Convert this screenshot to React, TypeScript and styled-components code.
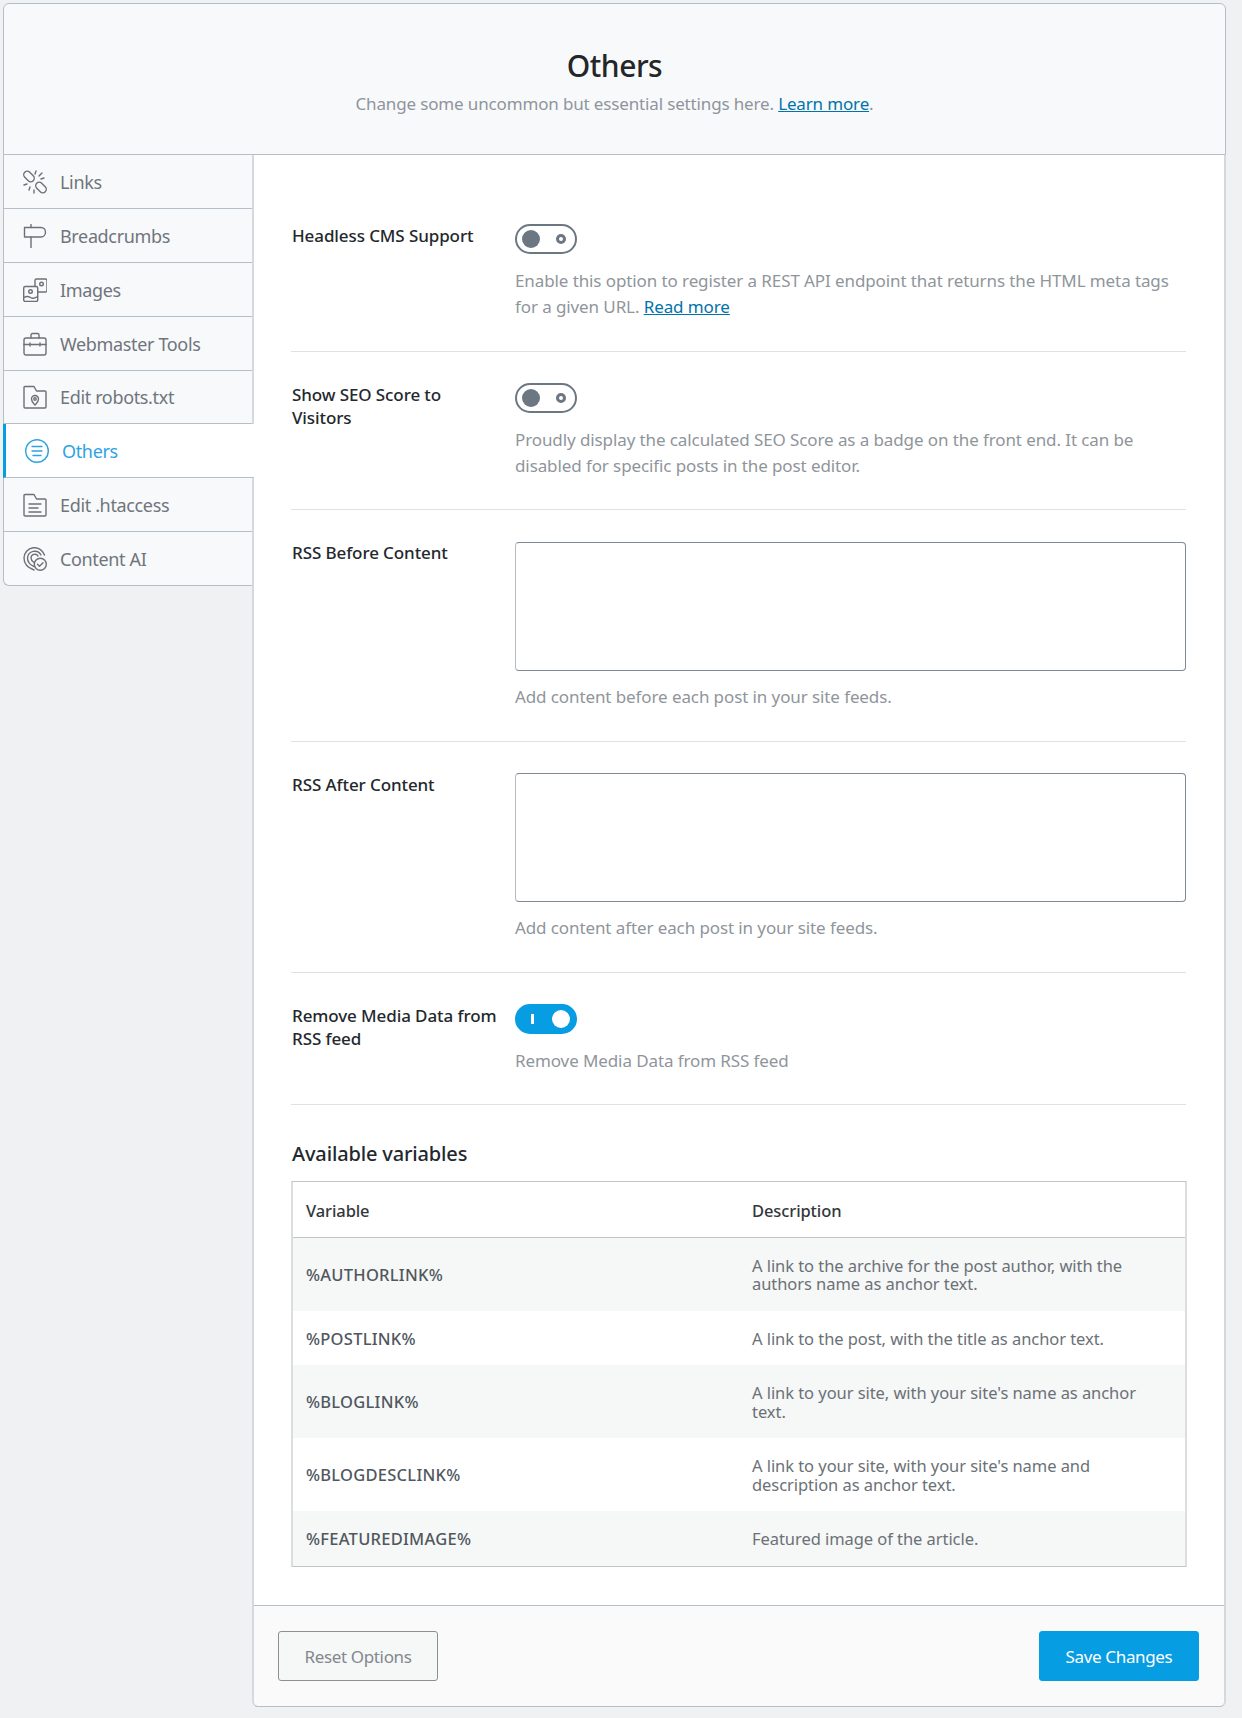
import * as React from 'react';
import styled, { createGlobalStyle } from 'styled-components';

const GlobalStyle = createGlobalStyle`
    html, body { margin: 0; padding: 0; background: #f0f1f3; }
    body {
        font-family: "Noto Sans", "Open Sans", "Liberation Sans", sans-serif;
        font-size: 16px;
        letter-spacing: -0.1px;
        color: #23282d;
    }
    * { box-sizing: border-box; }
`;

const Page = styled.div`
    width: 1242px;
    height: 1718px;
    padding: 3px 16px 12px 3px;
`;

const Header = styled.header`
    height: 152px;
    padding-top: 42px;
    text-align: center;
    background: #f8f9fb;
    border: 1px solid #b5bfc9;
    border-radius: 6px 6px 0 0;
`;

const Title = styled.h1`
    margin: 0;
    font-size: 30px;
    line-height: 40px;
    font-weight: 500;
    letter-spacing: -0.5px;
    color: #242628;
`;

const Subtitle = styled.p`
    margin: 5px 0 0;
    line-height: 26px;
    font-size: 17px;
    letter-spacing: -0.15px;
    color: #8f959b;
`;

const TextLink = styled.a`
    color: #0073aa;
    text-decoration: underline;
`;

const Body = styled.div`
    display: flex;
    align-items: flex-start;
`;

const Sidebar = styled.nav`
    width: 249px;
    flex: none;
    position: relative;
    z-index: 1;
    background: #f8f9fb;
    border-left: 1px solid #b5bfc9;
    border-bottom: 1px solid #b5bfc9;
    border-radius: 0 0 0 6px;
`;

const Tab = styled.div<{ $active?: boolean }>`
    display: flex;
    align-items: center;
    height: 53.88px;
    gap: 13px;
    padding: 1px 0 0 19px;
    margin-left: ${({ $active }) => ($active ? '-1px' : '0')};
    margin-right: ${({ $active }) => ($active ? '-2px' : '0')};
    font-size: 18px;
    letter-spacing: -0.35px;
    background: ${({ $active }) => ($active ? '#fff' : 'transparent')};
    color: ${({ $active }) => ($active ? '#2ea3e3' : '#6f757b')};
    border-left: ${({ $active }) => ($active ? '3px solid #069de3' : '0')};
    border-bottom: 1px solid #b5bfc9;

    &:last-child {
        border-bottom: 0;
        height: 52.88px;
    }
`;

const Main = styled.main`
    flex: 1;
    min-width: 0;
    background: #fff;
    border-left: 2px solid #d5d9de;
    border-right: 2px solid #d5d9de;
    border-bottom: 1px solid #b5bfc9;
    border-radius: 0 0 6px 6px;
`;

const Content = styled.div`
    padding: 38px 38px 38px 37px;
`;

const Row = styled.section<{ $top?: number; $bottom?: number }>`
    display: grid;
    grid-template-columns: 224px 1fr;
    padding: ${({ $top }) => $top ?? 31}px 0 ${({ $bottom }) => $bottom ?? 30}px;
    border-bottom: 1px solid #dfe1e3;
`;

const Label = styled.label<{ $low?: boolean }>`
    padding: 0 16px 0 1px;
    margin-top: ${({ $low }) => ($low ? '-1px' : '0')};
    font-size: 17px;
    line-height: 23px;
    font-weight: 500;
    color: #23282d;
`;

const Field = styled.div`
    min-width: 0;
`;

const Toggle = styled.span<{ $on?: boolean }>`
    display: flex;
    align-items: center;
    justify-content: space-between;
    width: 62px;
    height: 30px;
    border-radius: 15px;
    border: 2px solid ${({ $on }) => ($on ? '#069de3' : '#6b7782')};
    background: ${({ $on }) => ($on ? '#069de3' : '#fff')};
    padding: ${({ $on }) => ($on ? '0 5px 0 14px' : '0 9px 0 5px')};
`;

const Knob = styled.span<{ $on?: boolean }>`
    width: 18px;
    height: 18px;
    border-radius: 50%;
    background: ${({ $on }) => ($on ? '#fff' : '#6b7782')};
`;

const Ring = styled.span`
    width: 10px;
    height: 10px;
    border-radius: 50%;
    border: 3px solid #6b7782;
`;

const Bar = styled.span`
    width: 3px;
    height: 10px;
    background: #fff;
`;

const Hint = styled.p<{ $tight?: boolean }>`
    margin: ${({ $tight }) => ($tight ? '13px' : '14px')} 0 0;
    font-size: 17px;
    line-height: 26px;
    color: #8f959b;
`;

const TextBox = styled.textarea`
    display: block;
    width: 100%;
    height: 129px;
    padding: 8px;
    resize: none;
    background: #fff;
    border: 1px solid #7e8993;
    border-left-color: #b8bbbf;
    border-radius: 4px;
`;

const Heading = styled.h3`
    margin: 32px 0 10px 1px;
    font-size: 20px;
    line-height: 34px;
    font-weight: 500;
    letter-spacing: -0.15px;
    color: #23282d;
`;

const Table = styled.table`
    width: calc(100% + 1px);
    table-layout: fixed;
    border-collapse: separate;
    border-spacing: 0;
    border: 1px solid #c3c4c7;
    border-left-width: 2px;
    border-left-color: #dcdde0;
    border-right-width: 2px;
    border-right-color: #dcdde0;
    border-bottom-color: #c3c4c7;
    font-size: 16.5px;
    line-height: 18.5px;
`;

const HeadCell = styled.th`
    padding: 20px 12px 16px 13px;
    text-align: left;
    font-weight: 500;
    color: #32373c;
    border-bottom: 1px solid #c3c4c7;
`;

const TableRow = styled.tr<{ $alt: boolean }>`
    background: ${({ $alt }) => ($alt ? '#f6f7f7' : '#fff')};
`;

const Cell = styled.td<{ $name?: boolean }>`
    padding: 19px ${({ $name }) => ($name ? '12px' : '26px')} 17px 13px;
    vertical-align: middle;
    letter-spacing: ${({ $name }) => ($name ? '0.25px' : '-0.06px')};
    font-weight: ${({ $name }) => ($name ? 500 : 400)};
    color: ${({ $name }) => ($name ? '#50575e' : '#6b7176')};
`;

const Footer = styled.footer`
    display: flex;
    justify-content: space-between;
    align-items: center;
    height: 101px;
    padding: 0 25px 0 24px;
    background: #fafafa;
    border-top: 1px solid #b5bfc9;
    border-radius: 0 0 6px 6px;
`;

const Button = styled.button<{ $primary?: boolean }>`
    width: 160px;
    height: 50px;
    padding: 2px 0 0;
    font: inherit;
    font-size: 17px;
    letter-spacing: -0.35px;
    border-radius: 3px;
    background: ${({ $primary }) => ($primary ? '#069de3' : '#f6f7f7')};
    color: ${({ $primary }) => ($primary ? '#fff' : '#82888e')};
    border: 1px solid ${({ $primary }) => ($primary ? '#069de3' : '#8c8f94')};
`;

const Svg = styled.svg<{ $active?: boolean }>`
    width: 24px;
    height: 24px;
    flex: none;
    fill: none;
    stroke: ${({ $active }) => ($active ? '#2ea3e3' : '#6c7177')};
    stroke-width: 1.4;
    stroke-linecap: round;
    stroke-linejoin: round;
`;

const icons: Record<string, React.ReactNode> = {
    links: (
        <>
            <rect x="0" y="3" width="12" height="7" rx="3.500" transform="rotate(45 6 6.500)" />
            <rect x="12" y="14" width="12" height="7" rx="3.500" transform="rotate(45 18 17.500)" />
            <path d="M13 1l-1 3M19 3l-3 3M21 8l-3 1M1 15l3-1M6 20l1-3M11 23l0-3" />
        </>
    ),
    sign: (
        <>
            <path d="M8 0.500v3M8 13v10.500" />
            <path d="M1.500 3.500H18c2.500 0 4.500 2 4.500 4.700S20.500 13 18 13H1.500z" />
        </>
    ),
    images: (
        <>
            <path d="M12 8V2.500A1.500 1.500 0 0 1 13.500 1h9A1.500 1.500 0 0 1 24 2.500v10a1.500 1.500 0 0 1-1.500 1.500H15" />
            <circle cx="18.500" cy="6" r="1.800" />
            <rect x="0.700" y="8.500" width="14" height="15" rx="1.500" />
            <circle cx="7.500" cy="13.500" r="1.800" />
            <path d="M1 19.500c3-2 5-1 6.500 0s4 1 7-1" />
        </>
    ),
    toolbox: (
        <>
            <rect x="1" y="6" width="22" height="17" rx="2" />
            <path d="M8 6V3a1.500 1.500 0 0 1 1.500-1.500h5A1.500 1.500 0 0 1 16 3v3M1 12.500h22M7 11v3M17 11v3" />
        </>
    ),
    robots: (
        <>
            <path d="M1 2.500a1 1 0 0 1 1-1h9L13.500 6H22a1 1 0 0 1 1 1v15a1 1 0 0 1-1 1H2a1 1 0 0 1-1-1z" />
            <path d="M12 20c-1.500-1.500-3.500-3-3.500-6a3.500 3.500 0 0 1 7 0c0 3-2 4.500-3.500 6z" />
            <circle cx="12" cy="14" r="1.200" />
        </>
    ),
    others: (
        <>
            <circle cx="12" cy="12" r="11.300" />
            <path d="M7 7.500h10M7 12h10M8 16.500h8" />
        </>
    ),
    htaccess: (
        <>
            <path d="M1 2.500a1 1 0 0 1 1-1h9L13.500 6H22a1 1 0 0 1 1 1v15a1 1 0 0 1-1 1H2a1 1 0 0 1-1-1z" />
            <path d="M6 11h12M6 15h9M6 19h12" />
        </>
    ),
    ai: (
        <>
            <path d="M11 23C5.500 21 1 17 1 11a10.500 10.500 0 0 1 20.500-3" />
            <path d="M11 19.500C7.500 18 4.500 15 4.500 11a7.200 7.200 0 0 1 13.500-3" />
            <path d="M11 15.500C9.500 14.500 8 13 8 11a3.800 3.800 0 0 1 7-2" />
            <circle cx="17.300" cy="17.300" r="6" />
            <path d="M14.500 17.300l2 2 3.500-3.500" />
        </>
    ),
};

const tabs = [
    { id: 'links', label: 'Links' },
    { id: 'sign', label: 'Breadcrumbs' },
    { id: 'images', label: 'Images' },
    { id: 'toolbox', label: 'Webmaster Tools' },
    { id: 'robots', label: 'Edit robots.txt' },
    { id: 'others', label: 'Others', active: true },
    { id: 'htaccess', label: 'Edit .htaccess' },
    { id: 'ai', label: 'Content AI' },
];

const variables = [
    ['%AUTHORLINK%', 'A link to the archive for the post author, with the authors name as anchor text.'],
    ['%POSTLINK%', 'A link to the post, with the title as anchor text.'],
    ['%BLOGLINK%', "A link to your site, with your site's name as anchor text."],
    ['%BLOGDESCLINK%', "A link to your site, with your site's name and description as anchor text."],
    ['%FEATUREDIMAGE%', 'Featured image of the article.'],
];

const Switch = ({ on }: { on?: boolean }) => (
    <Toggle $on={on}>
        {on ? <Bar /> : <Knob />}
        {on ? <Knob $on /> : <Ring />}
    </Toggle>
);

export default function App() {
    return (
        <Page>
            <GlobalStyle />
            <Header>
                <Title>Others</Title>
                <Subtitle>
                    Change some uncommon but essential settings here. <TextLink>Learn more</TextLink>.
                </Subtitle>
            </Header>
            <Body>
                <Sidebar>
                    {tabs.map((tab) => (
                        <Tab key={tab.id} $active={tab.active}>
                            <Svg viewBox="0 0 24 24" $active={tab.active}>
                                {icons[tab.id]}
                            </Svg>
                            {tab.label}
                        </Tab>
                    ))}
                </Sidebar>
                <Main>
                    <Content>
                        <Row $bottom={31}>
                            <Label>Headless CMS Support</Label>
                            <Field>
                                <Switch />
                                <Hint>
                                    Enable this option to register a REST API endpoint that returns the HTML meta tags
                                    for a given URL. <TextLink>Read more</TextLink>
                                </Hint>
                            </Field>
                        </Row>
                        <Row>
                            <Label>Show SEO Score to Visitors</Label>
                            <Field>
                                <Switch />
                                <Hint>
                                    Proudly display the calculated SEO Score as a badge on the front end. It can be
                                    disabled for specific posts in the post editor.
                                </Hint>
                            </Field>
                        </Row>
                        <Row $top={32} $bottom={31}>
                            <Label $low>RSS Before Content</Label>
                            <Field>
                                <TextBox />
                                <Hint $tight>Add content before each post in your site feeds.</Hint>
                            </Field>
                        </Row>
                        <Row $bottom={31}>
                            <Label>RSS After Content</Label>
                            <Field>
                                <TextBox />
                                <Hint $tight>Add content after each post in your site feeds.</Hint>
                            </Field>
                        </Row>
                        <Row>
                            <Label>Remove Media Data from RSS feed</Label>
                            <Field>
                                <Switch on />
                                <Hint>Remove Media Data from RSS feed</Hint>
                            </Field>
                        </Row>
                        <Heading>Available variables</Heading>
                        <Table>
                            <thead>
                                <tr>
                                    <HeadCell>Variable</HeadCell>
                                    <HeadCell>Description</HeadCell>
                                </tr>
                            </thead>
                            <tbody>
                                {variables.map(([name, description], index) => (
                                    <TableRow key={name} $alt={index % 2 === 0}>
                                        <Cell $name>{name}</Cell>
                                        <Cell>{description}</Cell>
                                    </TableRow>
                                ))}
                            </tbody>
                        </Table>
                    </Content>
                    <Footer>
                        <Button>Reset Options</Button>
                        <Button $primary>Save Changes</Button>
                    </Footer>
                </Main>
            </Body>
        </Page>
    );
}
